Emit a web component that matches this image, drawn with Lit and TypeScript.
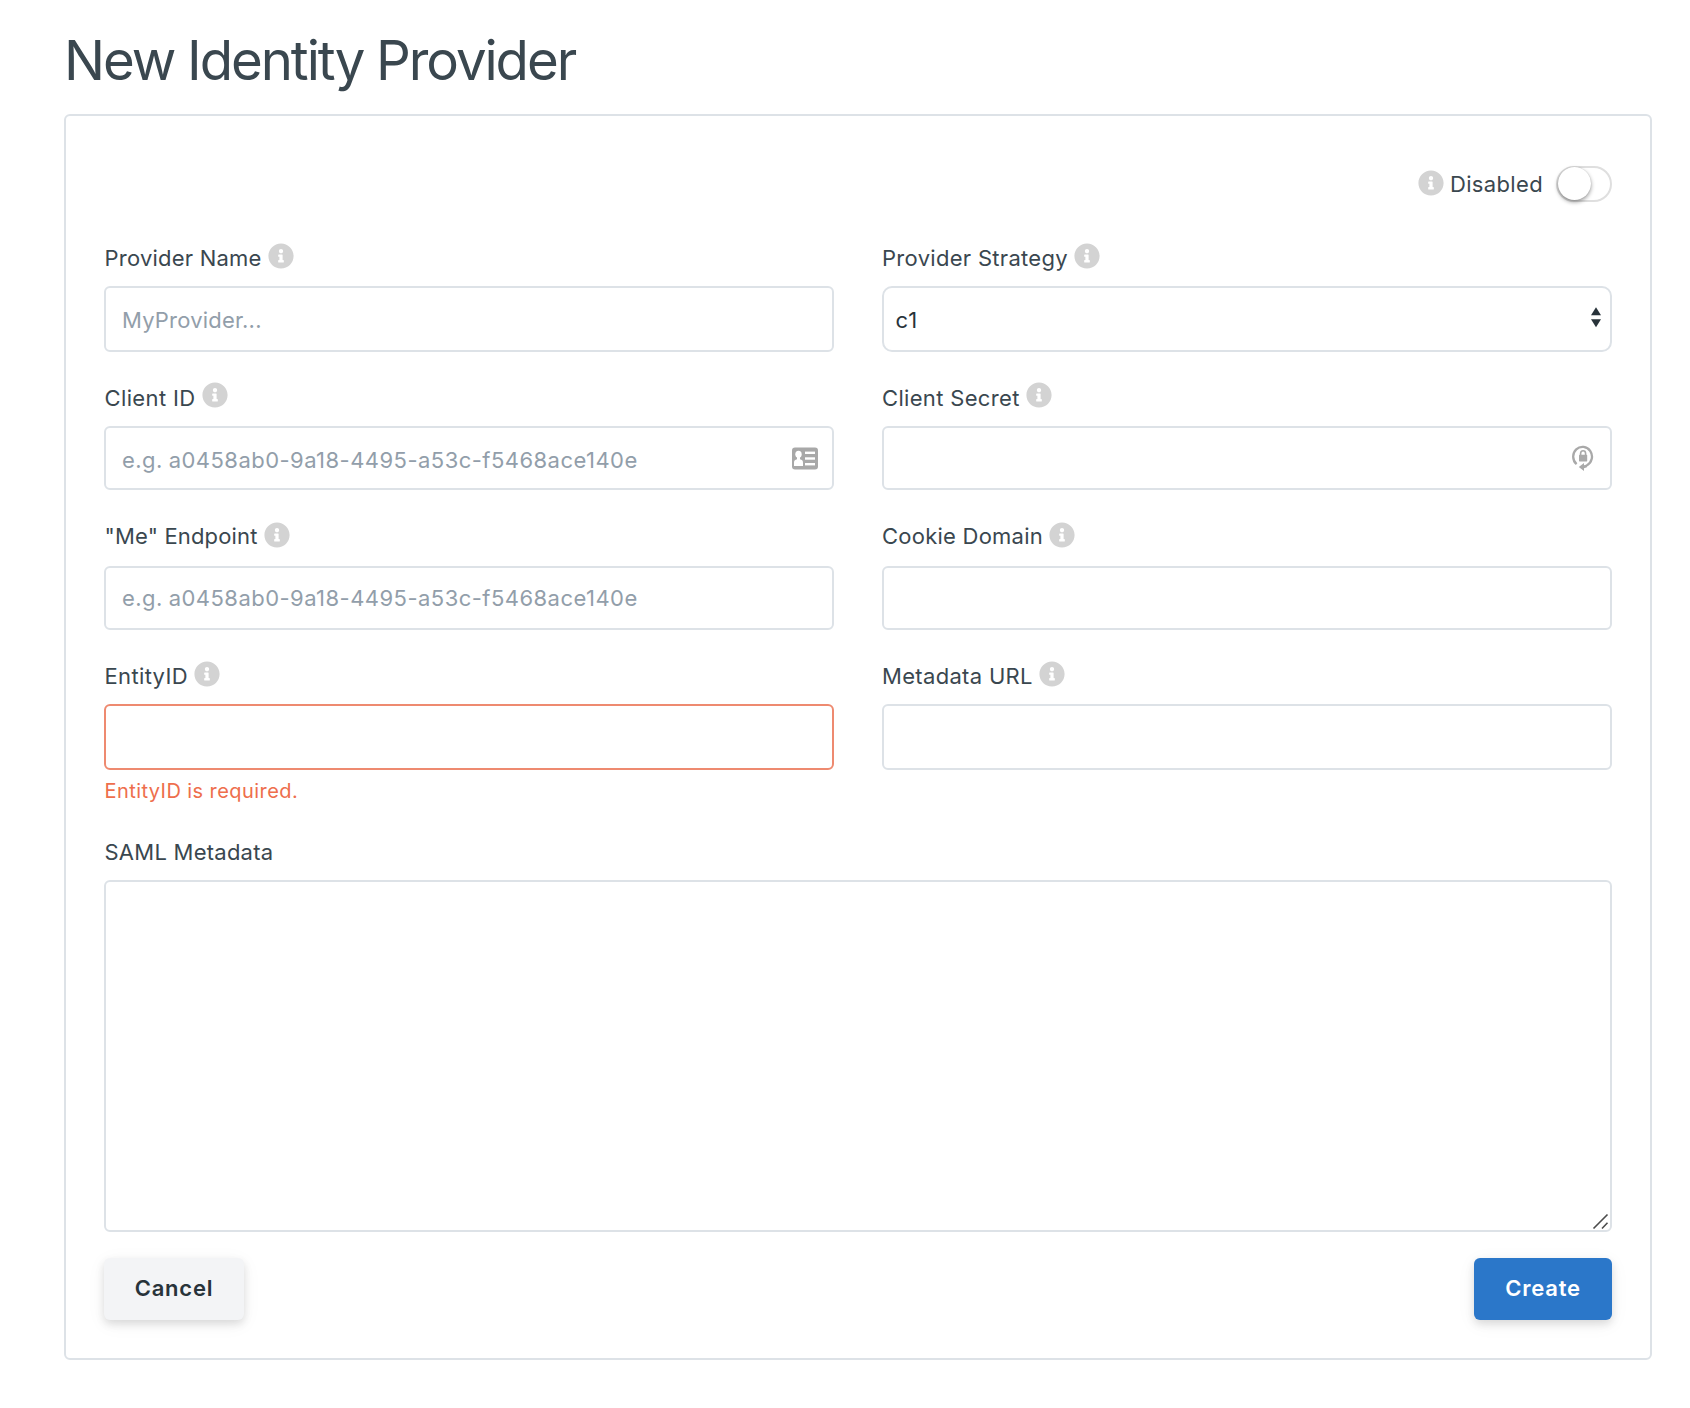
import { LitElement, html, css, svg, nothing } from "lit";
import { customElement, property } from "lit/decorators.js";
import { styleMap } from "lit/directives/style-map.js";

const INFO_PATH =
  "M256 8C119.043 8 8 119.083 8 256c0 136.997 111.043 248 248 248s248-111.003 248-248C504 119.083 392.957 8 256 8zm0 110c23.196 0 42 18.804 42 42s-18.804 42-42 42-42-18.804-42-42 18.804-42 42-42zm56 254c0 6.627-5.373 12-12 12h-88c-6.627 0-12-5.373-12-12v-24c0-6.627 5.373-12 12-12h12v-64h-12c-6.627 0-12-5.373-12-12v-24c0-6.627 5.373-12 12-12h64c6.627 0 12 5.373 12 12v100h12c6.627 0 12 5.373 12 12v24z";

@customElement("info-icon")
export class InfoIcon extends LitElement {
  static styles = css`
    :host { display: block; flex: none; width: 26px; height: 26px; }
    .icon { display: block; width: 26px; height: 26px; fill: #d3d3d3; }
  `;
  render() {
    return html`<svg class="icon" viewBox="0 0 512 512" aria-hidden="true">${svg`<path d=${INFO_PATH}/>`}</svg>`;
  }
}

@customElement("form-field")
export class FormField extends LitElement {
  @property() label = "";
  @property() placeholder = "";
  @property() value = "";
  @property() kind = "text";
  @property() adornment = "";
  @property() error = "";
  @property({ type: Number }) tracking = 0.3;

  static styles = css`
    :host { display: block; font-family: Inter, "Liberation Sans", sans-serif; color: #3a474f; }
    .label { display: flex; align-items: flex-start; height: 30px; margin-bottom: var(--label-gap, 13px); padding-left: var(--label-inset, 0.5px); }
    .text { font-size: 22px; line-height: 30px; white-space: nowrap; margin-right: 6px; }
    .info { margin-top: var(--icon-top, 0px); }
    .control { position: relative; }
    .input {
      display: block; box-sizing: border-box; width: 100%; height: var(--input-height, 64px);
      margin: 0; border: 2px solid #dde2e7; border-radius: 6px; background: #fff; outline: none;
      padding: var(--text-drop, 0px) 16px 0 16px; font: 22px Inter, "Liberation Sans", sans-serif;
      letter-spacing: 0.2px; color: #28333a;
    }
    .long { letter-spacing: 0.46px; word-spacing: -0.8px; }
    .input::placeholder { color: #929eaa; opacity: 1; }
    .invalid { border-color: #ee8a70; }
    .select { appearance: none; border-radius: 10px; padding-left: 11.5px; letter-spacing: 0.8px; }
    .area { height: 352px; resize: none; }
    .error { font-size: 20px; line-height: 26px; letter-spacing: 0.43px; color: #ee6e4c; margin-top: 7.5px; padding-left: 0.5px; }
    .adorn { position: absolute; display: block; pointer-events: none; }
    .arrows { right: 11px; top: 21px; width: 10px; height: 21px; fill: #28333a; }
    .card { right: 16px; top: 21px; width: 26px; height: 23px; }
    .lock { right: 18px; top: 18px; width: 22px; height: 28px; }
    .grip { right: 3px; bottom: 2px; width: 17px; height: 17px; }
  `;

  private renderAdornment() {
    switch (this.adornment) {
      case "arrows":
        return html`<svg class="adorn arrows" viewBox="0 0 10 21"><path d="M5 0.2 10 8.2H0zM0 12.2h10L5 20.2z" /></svg>`;
      case "card":
        return html`<svg class="adorn card" viewBox="0 0 26 23">
          <rect x="0" y="0.5" width="26" height="22" rx="3" fill="#a8a8a8" />
          <g fill="#fff">
            <ellipse cx="6.5" cy="7.3" rx="3.2" ry="3.5" />
            <rect x="5" y="9.5" width="3" height="3.5" />
            <path d="M2 18.9v-3.4c0-2 1.2-2.8 3-3.2h3c1.8.4 3 1.2 3 3.2v3.4z" />
            <rect x="13" y="4.6" width="10" height="2.4" />
            <rect x="13" y="10.3" width="10" height="2.4" />
            <rect x="13" y="16" width="10" height="2.4" />
          </g>
        </svg>`;
      case "lock":
        return html`<svg class="adorn lock" viewBox="0 0 22 28">
          <path d="M4.6 20.2A9.4 9.8 0 1 1 14.800 21.400" fill="none" stroke="#a9a9a9" stroke-width="2.300" />
          <path d="M6.800 23 12 18.900v2.400l3.500-1.100-.6 3-2.900 1v2.900z" fill="#a9a9a9" />
          <rect x="7" y="10.800" width="8.200" height="6.600" rx="0.600" fill="#a9a9a9" />
          <path d="M8.600 11V9.500a2.500 2.700 0 0 1 5 0V11" fill="none" stroke="#a9a9a9" stroke-width="1.600" />
        </svg>`;
      case "grip":
        return html`<svg class="adorn grip" viewBox="0 0 17 17">
          <path d="M1.5 15.5 15.5 1.5M10 15.5 15.5 9.8" fill="none" stroke="#4c4c4c" stroke-width="1.6" />
        </svg>`;
      default:
        return nothing;
    }
  }

  private renderControl() {
    if (this.kind === "select") {
      return html`<select class="input select" aria-label=${this.label}><option>${this.value}</option></select>`;
    }
    if (this.kind === "area") {
      return html`<textarea class="input area" aria-label=${this.label}></textarea>`;
    }
    const long = this.placeholder.length > 20 ? "long" : "";
    const invalid = this.error ? "invalid" : "";
    return html`<input class="input ${long} ${invalid}" aria-label=${this.label} placeholder=${this.placeholder} />`;
  }

  render() {
    return html`
      <div class="label">
        <span class="text" style=${styleMap({ letterSpacing: `${this.tracking}px` })}>${this.label}</span>
        ${this.kind === "area" ? nothing : html`<info-icon class="info"></info-icon>`}
      </div>
      <div class="control">${this.renderControl()}${this.renderAdornment()}</div>
      ${this.error ? html`<div class="error">${this.error}</div>` : nothing}
    `;
  }
}

interface Field {
  label: string;
  tracking: number;
  placeholder?: string;
  kind?: string;
  value?: string;
  adornment?: string;
  error?: string;
}

const SAMPLE_ID = "e.g. a0458ab0-9a18-4495-a53c-f5468ace140e";

const ROWS: { name: string; fields: Field[] }[] = [
  {
    name: "first",
    fields: [
      { label: "Provider Name", tracking: 0.22, placeholder: "MyProvider..." },
      { label: "Provider Strategy", tracking: 0.3, kind: "select", value: "c1", adornment: "arrows" },
    ],
  },
  {
    name: "second",
    fields: [
      { label: "Client ID", tracking: 0.37, placeholder: SAMPLE_ID, adornment: "card" },
      { label: "Client Secret", tracking: 0.33, adornment: "lock" },
    ],
  },
  {
    name: "third",
    fields: [
      { label: '"Me" Endpoint', tracking: 0.17, placeholder: SAMPLE_ID },
      { label: "Cookie Domain", tracking: 0.24 },
    ],
  },
  {
    name: "fourth",
    fields: [
      { label: "EntityID", tracking: 0.35, error: "EntityID is required." },
      { label: "Metadata URL", tracking: 0.32 },
    ],
  },
];

@customElement("app-root")
export class AppRoot extends LitElement {
  static styles = css`
    :host {
      display: block; box-sizing: border-box; min-height: 1408px; padding: 30px 38px 48px 64px;
      background: #fff; color: #3a474f; font-family: Inter, "Liberation Sans", sans-serif;
    }
    .title {
      margin: 0 0 24px; font-size: 54.5px; font-weight: 400; line-height: 60px;
      letter-spacing: -2.05px; word-spacing: -0.5px;
    }
    .panel {
      box-sizing: border-box; height: 1246px; padding: 50px 38px 0;
      border: 2px solid #dde2e7; border-radius: 6px;
    }
    .status { display: flex; justify-content: flex-end; align-items: center; height: 36px; margin-bottom: 41px; }
    .info { margin: 0 6px 2px 0; }
    .state { font-size: 22px; line-height: 36px; letter-spacing: 0.35px; margin-right: 13px; }
    .toggle {
      box-sizing: border-box; width: 56px; height: 36px; padding: 0 0 1px;
      border: 2px solid #dfdfdf; border-radius: 18px; background: #fff; display: flex; align-items: center;
    }
    .knob {
      width: 33px; height: 33px; margin-left: -0.5px; border-radius: 50%; background: #fff;
      box-shadow: 0 2px 4px rgba(0, 0, 0, 0.4), 0 0 1px rgba(0, 0, 0, 0.2);
    }
    .row { display: grid; grid-template-columns: 730px 730px; column-gap: 48px; margin-bottom: 31px; }
    .row > :last-child { --label-inset: 0px; }
    .first { --input-height: 66px; --icon-top: 0px; --text-drop: 2px; }
    .second { --text-drop: 4px; --icon-top: -1px; }
    .third { --label-gap: 15px; --icon-top: 1px; }
    .fourth { --input-height: 66px; --icon-top: 0px; height: 145px; }
    .actions { display: flex; justify-content: space-between; margin-top: 26px; }
    .button {
      box-sizing: border-box; height: 62px; padding: 0 0 2px; border: 0; border-radius: 6px;
      font: 600 22px Inter, "Liberation Sans", sans-serif; letter-spacing: 0.8px;
      box-shadow: 0 4px 8px rgba(0, 0, 0, 0.12), 0 4px 20px rgba(0, 0, 0, 0.05);
    }
    .cancel { width: 140px; background: #f3f4f6; color: #28333a; }
    .create { width: 138px; background: #2b77c9; color: #fff; }
  `;

  render() {
    return html`
      <h1 class="title">New Identity Provider</h1>
      <section class="panel">
        <div class="status">
          <info-icon class="info"></info-icon>
          <span class="state">Disabled</span>
          <button class="toggle" role="switch" aria-checked="false"><span class="knob"></span></button>
        </div>
        ${ROWS.map(
          (row) => html`<div class="row ${row.name}">
            ${row.fields.map(
              (f) => html`<form-field
                .label=${f.label}
                .tracking=${f.tracking}
                .placeholder=${f.placeholder ?? ""}
                .kind=${f.kind ?? "text"}
                .value=${f.value ?? ""}
                .adornment=${f.adornment ?? ""}
                .error=${f.error ?? ""}
              ></form-field>`
            )}
          </div>`
        )}
        <form-field .label=${"SAML Metadata"} .tracking=${0.25} .kind=${"area"} .adornment=${"grip"}></form-field>
        <div class="actions">
          <button class="button cancel">Cancel</button>
          <button class="button create">Create</button>
        </div>
      </section>
    `;
  }
}
